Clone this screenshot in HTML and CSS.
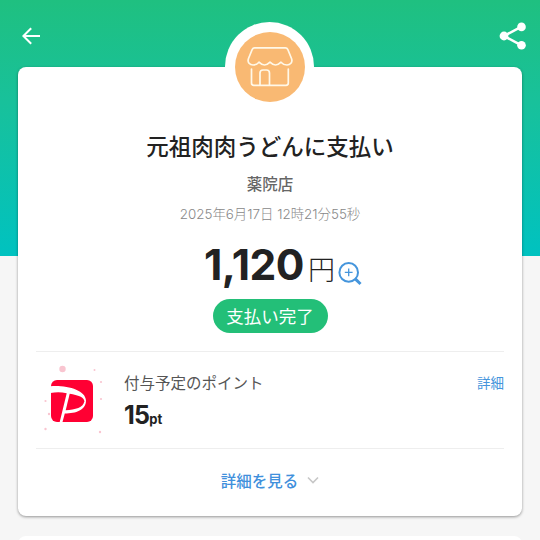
FILE: index.html
```html
<!DOCTYPE html>
<html lang="ja">
<head>
<meta charset="utf-8">
<title>支払い完了</title>
<link rel="stylesheet" href="styles.css">
</head>
<body>
<div class="screen">
  <header class="topbar">
    <svg class="back" viewBox="0 0 18 18" width="18" height="18"><path d="M18 9H1.500M9.200 1.200L1.400 9L9.200 16.800" fill="none" stroke="#fff" stroke-width="2"/></svg>
    <svg class="share" viewBox="0 0 28 28" width="28" height="28"><path d="M22.500 4.700L5 14L22.500 23.300" fill="none" stroke="#fff" stroke-width="2.600"/><g fill="#fff"><circle cx="22.500" cy="4.900" r="4.300"/><circle cx="5" cy="14" r="4.400"/><circle cx="22.500" cy="23.200" r="4.300"/></g></svg>
  </header>
  <main class="card">
    <div class="badge">
      <svg viewBox="0 0 70 70" width="70" height="70"><circle cx="35" cy="35" r="35" fill="#f9b973"/><g fill="none" stroke="#fff8e8" stroke-width="1.700" stroke-linecap="round" stroke-linejoin="round"><path d="M19.500 15.800H50.500Q52 15.800 52.700 17.300L56.500 26.500C58 30.500 55 33 52 33Q48.500 33 46 30.200Q43.200 33 40.500 33Q37.800 33 35 30.200Q32.200 33 29.500 33Q26.800 33 24 30.200Q21.500 33 18 33C15 33 12 30.500 13.500 26.500L17.300 17.300Q18 15.800 19.500 15.800Z"/><path d="M16.500 37V51Q16.500 53.300 18.800 53.300H51Q53.300 53.300 53.300 51V37M25 53V41Q25 38 28 38H31.500Q34.500 38 34.500 41V53"/></g></svg>
    </div>
    <h1 class="title">元祖肉肉うどんに支払い</h1>
    <p class="branch">薬院店</p>
    <p class="date">2025年6月17日 12時21分55秒</p>
    <div class="amount">
      <span class="num">1,120</span><span class="yen">円</span>
      <svg class="zoom" viewBox="0 0 24 24" width="24" height="24"><g fill="none" stroke="#4595dc"><circle cx="10.700" cy="10.400" r="9.300" stroke-width="2"/><path d="M17 16.700L22.500 22" stroke-width="3"/><path d="M10.700 6.500V14.300M6.800 10.400H14.600" stroke-width="1.300"/></g></svg>
    </div>
    <span class="status">支払い完了</span>
    <section class="points">
      <svg class="logo" viewBox="0 0 64 74" width="64" height="74">
        <g fill="#f9c5d0"><circle cx="20.500" cy="7" r="3.200"/><circle cx="52.500" cy="8" r="1"/><circle cx="59" cy="20" r="1.100"/><circle cx="59" cy="37" r="1.100"/><circle cx="3.500" cy="39" r="1.100"/><circle cx="7" cy="52" r="1.200"/><circle cx="3.500" cy="67" r="1.200"/><circle cx="58" cy="70" r="1.200"/></g>
        <rect x="9" y="18" width="42" height="42" rx="6" fill="#f03"/>
        <path d="M8.500 24.200C25 23 43.500 28 44 38.500C44 48 34 51.500 22.800 51.500L20.500 60H17.700L24.700 31.200C19 30 14 30 8.500 31Z" fill="#fff"/>
        <path d="M27.700 31.800C36 33.200 42.500 35.500 42.300 39.300C41.800 45.300 33 48 23.700 48.200Z" fill="#f03"/>
      </svg>
      <div class="info">
        <p class="label">付与予定のポイント</p>
        <p class="value">15<small>pt</small></p>
      </div>
      <a class="detail">詳細</a>
    </section>
    <a class="more">詳細を見る<svg viewBox="0 0 12 8" width="12" height="8"><path d="M1 1.500L6 6.500L11 1.500" fill="none" stroke="#c7c7c7" stroke-width="1.600"/></svg></a>
  </main>
  <div class="next"></div>
</div>
</body>
</html>
```
FILE: styles.css
```css
* { box-sizing: border-box; }
body {
  margin: 0;
  font-family: "Noto Sans CJK JP", sans-serif;
  color: #222;
}
p, h1 { margin: 0; }
svg { display: block; flex: none; }
.screen {
  height: 540px;
  overflow: hidden;
  background: linear-gradient(#1fc080, #18c19b 40%, #00c2c0) 0 0 / 100% 256px no-repeat #f6f6f6;
}
.topbar {
  height: 67px;
  padding: 22px 13px 0 22px;
  display: flex;
  justify-content: space-between;
}
.back { margin-top: 5px; }
.card {
  position: relative;
  height: 449px;
  margin: 0 18px;
  padding: 62px 18px 0;
  border-radius: 8px;
  background: #fff;
  box-shadow: 0 1px 3px rgba(0, 0, 0, .4);
  display: flex;
  flex-direction: column;
  align-items: center;
}
.badge {
  position: absolute;
  top: -45px;
  left: 207px;
  padding: 9.500px;
  border-radius: 50%;
  background: #fff;
}
.title { height: 32px; font-size: 22.500px; line-height: 32px; font-weight: 500; white-space: nowrap; }
.branch { height: 24px; margin-top: 10px; font-size: 15.500px; line-height: 24px; font-weight: 500; color: #666; }
.date { height: 20px; margin-top: 9px; font-family: Inter, "Noto Sans CJK JP", sans-serif; font-size: 13.400px; line-height: 20px; font-weight: 300; color: #888; }
.amount { height: 50px; margin: 16px 0 0 26px; display: flex; align-items: baseline; line-height: 50px; }
.num { font-family: Inter, sans-serif; font-weight: 700; font-size: 42.500px; letter-spacing: -.5px; }
.yen { margin-left: 4px; font-size: 27px; font-weight: 300; }
.zoom { align-self: flex-start; margin: 22px 0 0 3px; }
.status {
  width: 115px;
  height: 34px;
  margin-top: 9px;
  border-radius: 17px;
  background: #23bf78;
  color: #fff;
  font-size: 17.500px;
  line-height: 34px;
  text-align: center;
}
.points {
  width: 100%;
  height: 98px;
  margin-top: 18px;
  padding: 10px 0 0 6px;
  border: solid #eee;
  border-width: 1px 0;
  display: flex;
}
.info { margin-left: 18px; flex: 1; }
.label { height: 24px; margin-top: 8px; font-size: 15.500px; line-height: 24px; color: #555; }
.value { height: 30px; margin-top: 6px; font: 700 25px/30px Inter, sans-serif; letter-spacing: -.7px; }
.value small { font-size: 13px; letter-spacing: -.1px; }
.detail { margin-top: 10px; height: 20px; font-size: 13.500px; line-height: 20px; color: #4595dc; }
.more {
  height: 62px;
  display: flex;
  align-items: center;
  gap: 9px;
  color: #4090dc;
  font-size: 15.500px;
  font-weight: 500;
}
.next { height: 40px; margin: 20px 18px 0; border-radius: 8px; background: #fff; }
```
